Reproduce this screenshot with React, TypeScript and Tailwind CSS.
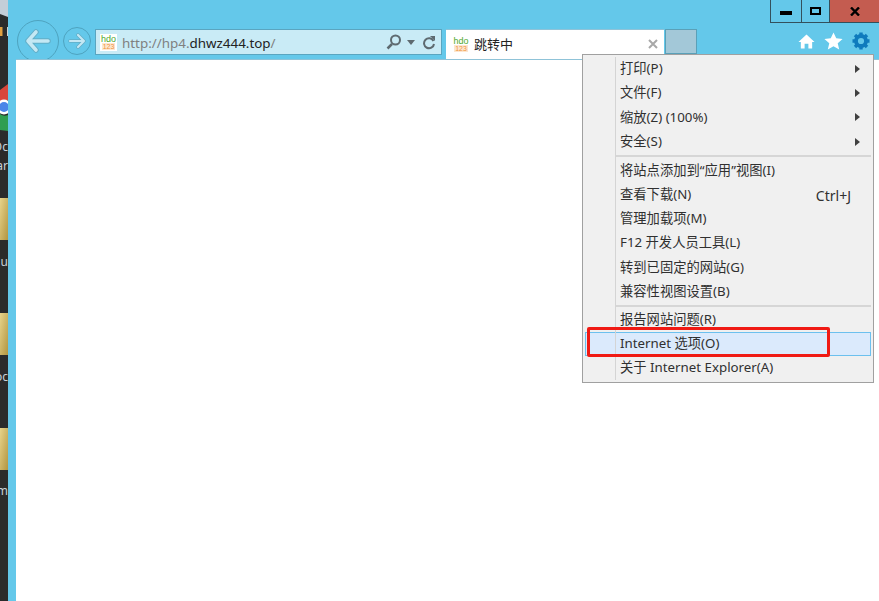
import React from "react";

const FONT = "font-['Noto_Sans','Noto_Sans_CJK_SC',sans-serif]";

type Item = { label: string; arrow?: boolean; shortcut?: string; active?: boolean };

const groups: Item[][] = [
  [
    { label: "打印(P)", arrow: true },
    { label: "文件(F)", arrow: true },
    { label: "缩放(Z) (100%)", arrow: true },
    { label: "安全(S)", arrow: true },
  ],
  [
    { label: "将站点添加到“应用”视图(I)" },
    { label: "查看下载(N)", shortcut: "Ctrl+J" },
    { label: "管理加载项(M)" },
    { label: "F12 开发人员工具(L)" },
    { label: "转到已固定的网站(G)" },
    { label: "兼容性视图设置(B)" },
  ],
  [
    { label: "报告网站问题(R)" },
    { label: "Internet 选项(O)", active: true },
    { label: "关于 Internet Explorer(A)" },
  ],
];

function Favicon({ small }: { small?: boolean }) {
  return (
    <div className={`flex shrink-0 flex-col items-center justify-center bg-white ${small ? "h-[16px] w-[16px]" : "h-[17px] w-[17px]"}`}>
      <span className="font-['Liberation_Sans',sans-serif] text-[9px] leading-[8px] text-[#4fa82e]">hdo</span>
      <span className="bg-[#fde6cf] px-px font-['Liberation_Sans',sans-serif] text-[7px] leading-[7px] text-[#f0953c]">123</span>
    </div>
  );
}

function MenuRow({ item }: { item: Item }) {
  return (
    <div
      className={`flex h-[24.2px] items-center pr-[11px] text-[13.3px] text-[#303030] ${
        item.active ? "border border-[#6cc0ee] bg-[#dbeafc] pl-[34px]" : "pl-[35px]"
      }`}
    >
      <span className="flex-1 whitespace-nowrap">{item.label}</span>
      {item.shortcut && <span className="mr-[9px] text-[14px]">{item.shortcut}</span>}
      {item.arrow && (
        <svg width="5" height="8" viewBox="0 0 5 8">
          <path d="M0 0 L5 4 L0 8 Z" fill="#404040" />
        </svg>
      )}
    </div>
  );
}

function Desktop() {
  const Folder = ({ top }: { top: string }) => (
    <div className={`absolute left-0 h-[42px] w-[8px] bg-gradient-to-br from-[#e8d48a] to-[#b2953f] ${top}`} />
  );
  const Label = ({ top, text }: { top: string; text: string }) => (
    <span className={`absolute right-0 whitespace-nowrap text-[12px] leading-[12px] text-[#c8d0d8] ${top}`}>{text}</span>
  );
  return (
    <div className="relative h-full w-[8px] shrink-0 overflow-hidden bg-[#2b2b2b]">
      <svg className="absolute left-0 top-0" width="8" height="40" viewBox="0 0 8 40">
        <path d="M0 0 H8 V17 L0 14 Z" fill="#c4ced8" />
        <path d="M0 27 H2.5 V36 H0 M0 29 H1 V34 H0 Z" fill="#e0a040" />
        <path d="M7 27 H8 V36 H7 Z" fill="#d0d0d0" />
      </svg>
      <svg className="absolute left-0 top-[84px]" width="8" height="48" viewBox="0 0 8 48">
        <path d="M8 0 V16 H3 L0 20 V6 Z" fill="#d9463b" />
        <circle cx="4" cy="23" r="7.5" fill="#ffffff" />
        <circle cx="4" cy="23" r="5" fill="#4a86e8" />
        <path d="M0 30 A8 8 0 0 0 8 31 V47 L0 46 Z" fill="#2f9e50" />
      </svg>
      <Label top="top-[141px]" text="Oc" />
      <Label top="top-[160px]" text="ar" />
      <Folder top="top-[198px]" />
      <Label top="top-[256px]" text="u" />
      <Folder top="top-[313px]" />
      <Label top="top-[371px]" text="oc" />
      <Folder top="top-[428px]" />
      <Label top="top-[485px]" text="m" />
    </div>
  );
}

export default function App() {
  return (
    <div className={`relative flex h-[601px] w-[879px] overflow-hidden bg-[#64c8ea] ${FONT}`}>
      <Desktop />
      <div className="flex h-full flex-1 flex-col">
        <header className="relative flex h-[59px] shrink-0 overflow-hidden">
          <div className="flex flex-1 items-start pl-[9px] pt-[20px]">
            <div className="flex h-[42px] w-[42px] shrink-0 items-center justify-center rounded-full border border-[#4ea3bf]">
              <svg width="26" height="24" viewBox="0 0 26 24" fill="none" strokeLinejoin="round" strokeLinecap="round">
                <path d="M11 3 L3 12 L11 21 M3 12 H23" stroke="#62adc6" strokeWidth="5.5" />
                <path d="M11 3 L3 12 L11 21 M3 12 H23" stroke="#c4e8f4" strokeWidth="3.6" />
              </svg>
            </div>
            <div className="ml-[4px] mt-[7px] flex h-[28px] w-[28px] shrink-0 items-center justify-center rounded-full border border-[#4ea3bf]">
              <svg width="18" height="16" viewBox="0 0 18 16" fill="none" strokeLinejoin="round" strokeLinecap="round">
                <path d="M10 2 L16 8 L10 14 M16 8 H2" stroke="#62adc6" strokeWidth="3.6" />
                <path d="M10 2 L16 8 L10 14 M16 8 H2" stroke="#c4e8f4" strokeWidth="2.2" />
              </svg>
            </div>
            <div className="ml-[4px] mt-[9px] flex h-[26px] w-[347px] shrink-0 items-center border border-[#5aa5c0] bg-[#c9ebf6] pl-[4px] pr-[5px]">
              <Favicon />
              <span className="ml-[5px] flex-1 translate-y-px whitespace-nowrap text-[13.4px] text-[#808080]">
                http://hp4.<span className="text-[#222222]">dhwz444.top</span>/
              </span>
              <svg width="16" height="16" viewBox="0 0 16 16" fill="none" stroke="#5e6a70" strokeWidth="2">
                <circle cx="9.5" cy="6" r="4.5" />
                <path d="M6 10 L1.5 14.5" strokeWidth="2.5" />
              </svg>
              <svg className="ml-[5px]" width="8" height="5" viewBox="0 0 8 5">
                <path d="M0 0 H8 L4 5 Z" fill="#5e6a70" />
              </svg>
              <svg className="ml-[7px]" width="14" height="15" viewBox="0 0 14 15" fill="none" stroke="#5e6a70" strokeWidth="2">
                <path d="M11.5 6 A5 5 0 1 0 12 9" />
                <path d="M8 1 L13 1 L13 6 Z" fill="#5e6a70" stroke="none" />
              </svg>
            </div>
            <div className="ml-[4px] mt-[9px] flex h-[30px] w-[218px] shrink-0 items-center border-t border-[#8fc3d8] bg-white pl-[7px] pr-[6px]">
              <Favicon small />
              <span className="ml-[5px] flex-1 text-[13px] text-[#222222]">跳转中</span>
              <svg className="-translate-y-px" width="10" height="10" viewBox="0 0 10 10" stroke="#a8a8a8" strokeWidth="2">
                <path d="M1 1 L9 9 M9 1 L1 9" />
              </svg>
            </div>
            <div className="ml-[1px] mt-[9px] h-[25px] w-[32px] shrink-0 border border-[#5aa0b8] bg-[#a3c8d8]" />
          </div>
          <div className="flex w-[109px] shrink-0 flex-col items-stretch">
            <div className="flex h-[23px] border-b border-l border-[#33505c]">
              <div className="flex w-[31px] items-center justify-center border-r border-[#33505c] pt-[4px]">
                <div className="h-[4px] w-[12px] bg-black" />
              </div>
              <div className="flex w-[28px] items-center justify-center border-r border-[#33505c]">
                <div className="h-[8px] w-[11px] border-2 border-black" />
              </div>
              <div className="flex flex-1 items-center justify-center bg-[#c45c50]">
                <svg width="10" height="9" viewBox="0 0 10 9" stroke="#000000" strokeWidth="2.4">
                  <path d="M1 0.5 L9 8.5 M9 0.5 L1 8.5" />
                </svg>
              </div>
            </div>
            <div className="mt-[9px] flex items-center justify-end gap-[9px] pr-[9px]">
              <svg width="17" height="17" viewBox="0 0 18 17">
                <path d="M9 1 L17.5 9 H15 V16 H11 V11 H7 V16 H3 V9 H0.5 Z" fill="#ffffff" />
              </svg>
              <svg width="19" height="18" viewBox="0 0 18 17">
                <path d="M9 0.5 L11.6 6 L17.6 6.6 L13 10.6 L14.4 16.5 L9 13.4 L3.6 16.5 L5 10.6 L0.4 6.6 L6.4 6 Z" fill="#ffffff" />
              </svg>
              <svg width="18" height="18" viewBox="0 0 18 18">
                <circle cx="9" cy="9" r="5" fill="none" stroke="#0f7bbd" strokeWidth="3.8" />
                <path d="M9 0.5 V4 M9 14 V17.5 M0.5 9 H4 M14 9 H17.5 M3 3 L5.4 5.4 M12.6 12.6 L15 15 M15 3 L12.6 5.4 M5.4 12.6 L3 15" stroke="#0f7bbd" strokeWidth="3.4" />
              </svg>
            </div>
          </div>
        </header>
        <main className="ml-[8px] flex-1 border-t border-[#8fc3d8] bg-white" />
      </div>

      <div className="absolute left-[582px] top-[54px] w-[292px] border border-[#a0a0a0] bg-[#f0f0f0] p-[2px]">
        <div className="absolute bottom-[2px] left-[32px] top-[2px] w-px bg-[#d4d4d4]" />
        {groups.map((group, i) => (
          <div key={i}>
            {i > 0 && <div className={`ml-[31px] h-[2px] bg-[#d6d6d6] ${i === 1 ? "mb-[2px] mt-[1px]" : "my-[1px]"}`} />}
            {group.map((item) => (
              <MenuRow key={item.label} item={item} />
            ))}
          </div>
        ))}
      </div>
      <div className="absolute left-[587px] top-[327px] h-[30px] w-[243px] rounded-[2px] border-[3px] border-[#f01a14]" />
    </div>
  );
}
